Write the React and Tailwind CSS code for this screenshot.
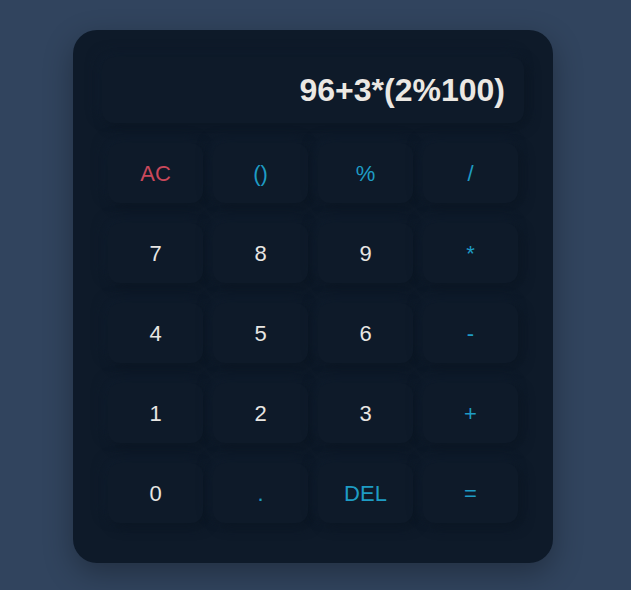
import React from "react";

const rows = [
  [["AC", "text-[#c9485b]"], ["()", "text-[#1e9cc4]"], ["%", "text-[#1e9cc4]"], ["/", "text-[#1e9cc4]"]],
  [["7", "text-[#e8e6e3]"], ["8", "text-[#e8e6e3]"], ["9", "text-[#e8e6e3]"], ["*", "text-[#1e9cc4]"]],
  [["4", "text-[#e8e6e3]"], ["5", "text-[#e8e6e3]"], ["6", "text-[#e8e6e3]"], ["-", "text-[#1e9cc4]"]],
  [["1", "text-[#e8e6e3]"], ["2", "text-[#e8e6e3]"], ["3", "text-[#e8e6e3]"], ["+", "text-[#1e9cc4]"]],
  [["0", "text-[#e8e6e3]"], [".", "text-[#1e9cc4]"], ["DEL", "text-[#1e9cc4]"], ["=", "text-[#1e9cc4]"]],
];

export default function App() {
  return (
    <div className="w-[631px] h-[590px] bg-[#31445e] pl-[73px] pt-[30px] font-['Liberation_Sans',Arial,sans-serif]">
      <div className="w-[480px] h-[533px] rounded-[24px] bg-[#0e1a29] shadow-[0_10px_30px_rgba(0,0,0,0.3)] px-[29px] pt-[27px]">
        <div className="h-[66px] rounded-[12px] bg-[#0e1a29] shadow-[4px_4px_12px_#0b1623,-4px_-4px_12px_#101d2d] flex items-center justify-end pr-[19px] text-[32px] font-bold text-[#ebe8e3]">
          96+3*(2%100)
        </div>
        <div className="mt-[20px] px-[6px] grid grid-cols-4 gap-x-[10px] gap-y-[20px]">
          {rows.flat().map(([label, color], i) => (
            <div
              key={i}
              className={`h-[60px] rounded-[12px] bg-[#0e1a29] shadow-[4px_4px_12px_#0b1623,-4px_-4px_12px_#101d2d] flex items-center justify-center text-[22px] ${color}`}
            >
              {label}
            </div>
          ))}
        </div>
      </div>
    </div>
  );
}
